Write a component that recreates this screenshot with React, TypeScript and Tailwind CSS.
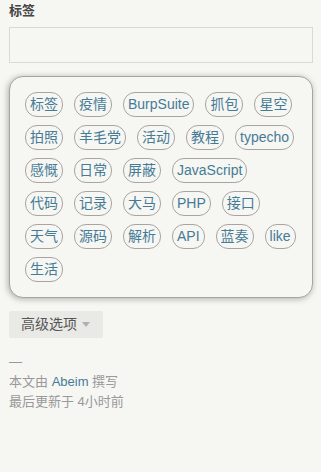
import React from "react";

// rows follow the wrap in the reference panel
const TAG_ROWS = [
  ["标签", "疫情", "BurpSuite", "抓包", "星空"],
  ["拍照", "羊毛党", "活动", "教程", "typecho"],
  ["感慨", "日常", "屏蔽", "JavaScript"],
  ["代码", "记录", "大马", "PHP", "接口"],
  ["天气", "源码", "解析", "API", "蓝奏", "like"],
  ["生活"],
];

const font = "font-['Liberation_Sans','Noto_Sans_CJK_SC',sans-serif]";

export default function App() {
  return (
    <div className={`min-h-screen bg-[#f6f6f3] pl-[9px] pr-[8px] pt-[2px] ${font}`}>
      <label className="block text-[13px] leading-[18px] font-bold text-[#444]">标签</label>
      <input
        type="text"
        className="mt-[7px] block h-[36px] w-full border border-[#d9d9d6] bg-[#f6f6f3] px-2 outline-none"
      />

      {/* tag cloud */}
      <div className="mt-[13px] flex flex-col gap-y-[8px] rounded-[14px] border border-[#a9a4a0] bg-[#f6f6f3] p-[15px] shadow-[-1px_1px_6px_rgba(0,0,0,0.3)]">
        {TAG_ROWS.map((row, i) => (
          <div key={i} className="flex gap-x-[11px]">
            {row.map((t) => (
              <a
                key={t}
                href="#"
                className="block h-[25px] rounded-[12px] border border-[#a9a4a0] px-[4px] text-[14px] leading-[23px] text-[#467b96]"
              >
                {t}
              </a>
            ))}
          </div>
        ))}
      </div>

      <button
        type="button"
        className="mt-[13px] flex h-[27px] w-[94px] items-center gap-[5px] rounded-[2px] bg-[#e9e9e6] pl-[12px] text-[14px] text-[#555]"
      >
        高级选项
        <span className="h-0 w-0 border-x-[4px] border-t-[5px] border-x-transparent border-t-[#b0b0b0]" />
      </button>

      <div className="mt-[14px] text-[13px] leading-[20px] text-[#999]">
        <p>—</p>
        <p>
          本文由 <a href="#" className="text-[#467b96]">Abeim</a> 撰写
        </p>
        <p>最后更新于 4小时前</p>
      </div>
    </div>
  );
}
